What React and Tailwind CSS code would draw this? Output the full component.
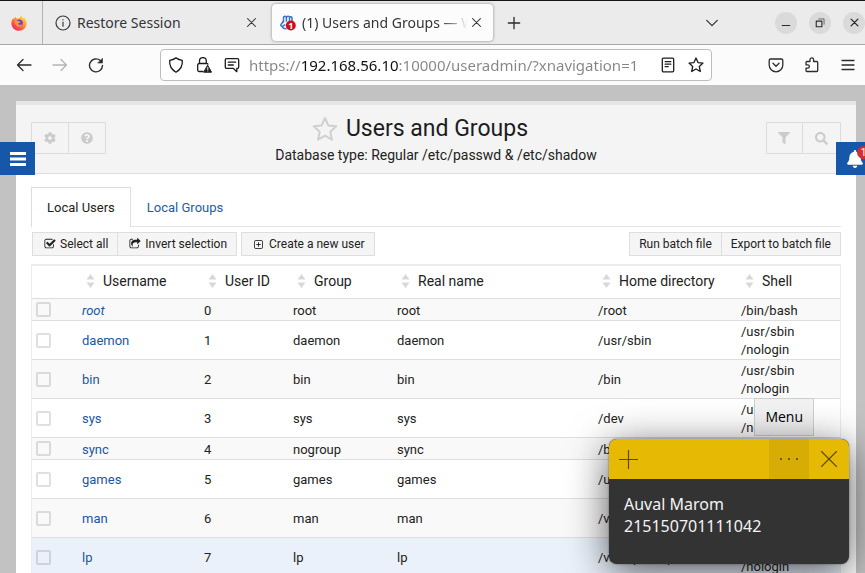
import React from "react";
import { FaBell, FaCog, FaFilter, FaQuestionCircle, FaSearch } from "react-icons/fa";

const users = [
  { name: "root", id: 0, group: "root", real: "root", home: "/root", shell: ["/bin/bash"], system: true },
  { name: "daemon", id: 1, group: "daemon", real: "daemon", home: "/usr/sbin", shell: ["/usr/sbin", "/nologin"] },
  { name: "bin", id: 2, group: "bin", real: "bin", home: "/bin", shell: ["/usr/sbin", "/nologin"] },
  { name: "sys", id: 3, group: "sys", real: "sys", home: "/dev", shell: ["/usr/sbin", "/nologin"] },
  { name: "sync", id: 4, group: "nogroup", real: "sync", home: "/bin", shell: ["/bin/sync"] },
  { name: "games", id: 5, group: "games", real: "games", home: "/usr/games", shell: ["/usr/sbin", "/nologin"] },
  { name: "man", id: 6, group: "man", real: "man", home: "/var/cache/man", shell: ["/usr/sbin", "/nologin"] },
  { name: "lp", id: 7, group: "lp", real: "lp", home: "/var/spool/lpd", shell: ["/usr/sbin", "/nologin"], active: true },
];

const headings = ["Username", "User ID", "Group", "Real name", "Home directory", "Shell"];

function Line({ size = 16, width = 1.3, className = "", children }) {
  return (
    <svg
      width={size}
      height={size}
      viewBox="0 0 16 16"
      fill="none"
      stroke="currentColor"
      strokeWidth={width}
      strokeLinecap="round"
      strokeLinejoin="round"
      className={"shrink-0 " + className}
      aria-hidden="true"
    >
      {children}
    </svg>
  );
}

function FirefoxLogo() {
  return (
    <svg width="16" height="16" viewBox="0 0 16 16" aria-hidden="true">
      <defs>
        <linearGradient id="flame" x1="0.85" y1="0.1" x2="0.2" y2="0.95">
          <stop offset="0" stopColor="#ffe14a" />
          <stop offset="0.4" stopColor="#ff9a2a" />
          <stop offset="0.75" stopColor="#ff4a45" />
          <stop offset="1" stopColor="#f02a6a" />
        </linearGradient>
      </defs>
      <path
        d="M9.6.3c1.4.8 2 1.900 2.300 2.900.6.2 1 .1 1.300-.6 1.500 1.500 2.600 3.500 2.500 6C15.500 12.800 12.200 15.800 8 15.800S.4 12.600.4 8.500c0-2 .6-3.900 1.900-5.500.1.700.3 1.100.6 1.300.4-1.200 1-2 1.900-2.600 0 .8.3 1.400.9 1.900 1 .1 1.900-.1 2.600-.7.8-.7 1.200-1.600 1.300-2.600z"
        fill="url(#flame)"
      />
      <circle cx="8.300" cy="8" r="3.600" fill="#7a3fd0" />
      <path d="M3.500 6.200c1.300-.8 2.900-.8 4.300.1l1.700.4c-.2.900-1 1.300-2.100 1.400-.6.900.1 1.900 1.400 1.900 1 0 1.800-.4 2.400-1-.3 2-1.700 2.900-3.300 2.700-2.500-.2-4.300-2.600-4.400-5.500z" fill="#ff9a35" />
    </svg>
  );
}

function WebminLogo() {
  return (
    <svg width="16" height="16" viewBox="0 0 16 16" aria-hidden="true">
      <g fill="none" stroke="#3d72c4" strokeWidth="1.500" strokeLinejoin="round">
        <path d="M3.500 7.500V2.700C3.500.8 6.400.8 6.400 2.700 6.400.6 9.700.6 9.700 2.700c.2-1.500 2.300-1.200 2.300.3v3" />
        <path d="M6.400 2.700v4M9.500 2.700v3" />
        <path d="M3.500 6 1.200 9.200c-.9 1.500.5 2.800 1.700 1.900l2.300-1.600M2.500 11.200c0 1.600 1.500 2.500 4 2.500" />
      </g>
      <circle cx="10.800" cy="10.500" r="5" fill="#cf1010" />
      <text x="10.800" y="14" textAnchor="middle" fontSize="9" fontWeight="700" fontFamily="Open Sans, sans-serif" fill="#fff">1</text>
    </svg>
  );
}

function StarOutline() {
  return (
    <svg width="26" height="26" viewBox="0 0 26 26" fill="none" stroke="#d0d0d0" strokeWidth="2" strokeLinejoin="round" aria-hidden="true">
      <path d="m13 2 3.300 7.400 8 .9-6 5.400 1.700 8L13 19.700l-7 4 1.700-8-6-5.400 8-.9z" />
    </svg>
  );
}

function CheckSquare() {
  return (
    <svg width="12" height="12" viewBox="0 0 1792 1792" fill="currentColor" aria-hidden="true">
      <path d="M1472 930v318q0 119-84.500 203.500t-203.500 84.500h-832q-119 0-203.500-84.500t-84.500-203.500v-832q0-119 84.500-203.500t203.500-84.500h832q63 0 117 25 15 7 18 23 3 17-9 29l-49 49q-10 10-23 10-3 0-9-2-23-6-45-6h-832q-66 0-113 47t-47 113v832q0 66 47 113t113 47h832q66 0 113-47t47-113v-254q0-13 9-22l64-64q10-10 23-10 6 0 12 3 20 8 20 29zm231-489l-814 814q-24 24-57 24t-57-24l-430-430q-24-24-24-57t24-57l110-110q24-24 57-24t57 24l263 263 647-647q24-24 57-24t57 24l110 110q24 24 24 57t-24 57z" />
    </svg>
  );
}

function ShareSquare() {
  return (
    <svg width="12" height="12" viewBox="0 0 1792 1792" fill="currentColor" aria-hidden="true">
      <path d="M1472 989v259q0 119-84.500 203.500t-203.500 84.500h-832q-119 0-203.500-84.500t-84.500-203.500v-832q0-119 84.500-203.500t203.500-84.500h255q13 0 22.500 9.500t9.500 22.500q0 27-26 32-77 26-133 60-10 4-16 4h-112q-66 0-113 47t-47 113v832q0 66 47 113t113 47h832q66 0 113-47t47-113v-214q0-19 18-29 28-13 54-37 16-16 35-8 21 9 21 29zm237-496l-384 384q-18 19-45 19-12 0-25-5-39-17-39-59v-192h-160q-323 0-438 131-119 137-74 473 3 23-20 34-8 2-12 2-16 0-26-13-10-14-21-31t-39.500-68.500-49.500-99.500-38.500-114-17.500-122q0-49 3.500-91t14-90 28-88 47-81.500 68.500-74 94.500-61.500 124.500-48.500 159.500-30.500 196.500-11h160v-192q0-42 39-59 13-5 25-5 26 0 45 19l384 384q19 19 19 45t-19 45z" />
    </svg>
  );
}

function PlusSquare() {
  return (
    <svg width="9" height="9" viewBox="0 0 10 10" fill="none" stroke="currentColor" aria-hidden="true">
      <rect x=".5" y=".5" width="9" height="9" rx="1.500" />
      <path d="M2.500 5h5M5 2.500v5" />
    </svg>
  );
}

function SortArrows() {
  return (
    <svg width="9" height="14" viewBox="0 0 9 14" fill="#d8d8d8" aria-hidden="true">
      <path d="M4.500 0 8.500 5.500h-8zM4.500 14 .5 8.500h8z" />
    </svg>
  );
}

function TabStrip() {
  return (
    <div className="flex h-[45px] shrink-0 items-stretch border-t border-b border-t-[#17131a] border-b-[#a8a8a8] bg-[#ebebeb]">
      <button aria-label="Firefox View" className="flex w-[43px] items-center justify-center border-r border-[#b4b4b4] pr-1">
        <FirefoxLogo />
      </button>
      <div className="flex w-[225px] items-center pr-2 pl-3">
        <Line width={1.2} className="text-[#3a3a3f]">
          <circle cx="8" cy="8" r="7" />
          <path d="M8 7.200v4M8 4.700v.1" />
        </Line>
        <span className="ml-1.5 flex-1 text-sm text-[#35353b]">Restore Session</span>
        <button aria-label="Close tab" className="p-1 text-[#3a3a3f]">
          <Line size={9} width={1.8}><path d="m1 1 14 14M15 1 1 15" /></Line>
        </button>
      </div>
      <div className="my-[3px] ml-1 flex w-[221px] items-center rounded bg-[#fcfcfc] pr-2 pl-2 shadow-[0_0_3px_rgba(0,0,0,0.45)]">
        <WebminLogo />
        <span className="ml-1.5 w-0 flex-1 overflow-hidden text-sm whitespace-nowrap text-[#35353b] [mask-image:linear-gradient(to_right,black_84%,transparent)]">
          (1) Users and Groups — Webmin
        </span>
        <button aria-label="Close tab" className="p-1 text-[#3a3a3f]">
          <Line size={9} width={1.8}><path d="m1 1 14 14M15 1 1 15" /></Line>
        </button>
      </div>
      <button aria-label="New tab" className="ml-[14px] text-[#2b2b30]">
        <Line size={14} width={1.5}><path d="M8 1.500v13M1.500 8h13" /></Line>
      </button>
      <button aria-label="List all tabs" className="mr-[56px] ml-auto text-[#3a3a3f]">
        <Line size={14} width={1.6}><path d="m2 5 6 6 6-6" /></Line>
      </button>
      <div className="flex items-center gap-3 text-[#2b2b2b]">
        <button aria-label="Minimize" className="flex size-[22px] items-center justify-center rounded-full bg-[#dadada]">
          <Line size={10} width={1.8}><path d="M2 12h12" /></Line>
        </button>
        <button aria-label="Restore" className="flex size-[22px] items-center justify-center rounded-full bg-[#dadada]">
          <Line size={10} width={1.8}><path d="M2 5h9v9H2z" /><path d="M6 1.500h8.500V10" strokeWidth="1" /></Line>
        </button>
        <button aria-label="Close window" className="flex size-[22px] items-center justify-center rounded-full bg-[#dadada]">
          <Line size={9} width={2.4}><path d="m2 2 12 12M14 2 2 14" /></Line>
        </button>
      </div>
    </div>
  );
}

function NavBar() {
  return (
    <div className="flex h-10 shrink-0 items-center bg-[#fbfbfb] pr-[9px] pl-4 text-[#2b2b30]">
      <div className="flex w-36 gap-5">
        <button aria-label="Back"><Line><path d="M15 8H1.500M7 2.500 1.500 8 7 13.500" /></Line></button>
        <button aria-label="Forward" className="text-[#b5b5b8]"><Line><path d="M1 8h13.500M9 2.500 14.500 8 9 13.500" /></Line></button>
        <button aria-label="Reload">
          <Line width={1.4}>
            <path d="M14.500 8.500A6.500 6.500 0 1 1 12.300 3.500" />
            <path d="M14.500 1.500v4.500H10z" fill="currentColor" strokeWidth=".6" />
          </Line>
        </button>
      </div>
      <div className="flex h-8 flex-1 items-center rounded border border-[#bdbdbf] bg-white px-[7px] text-[#1c1c20]">
        <Line className="mr-3"><path d="M8 .9c2 1.400 4 2.100 6.300 2.400.4 5-1.500 9.300-6.300 11.900C3.200 12.600 1.300 8.300 1.700 3.300 4 3 6 2.300 8 .9z" /></Line>
        <Line className="mr-3">
          <path d="M7 14.500H3.200c-.9 0-1.500-.6-1.500-1.500V8c0-.8.6-1.500 1.500-1.500h7.500c.6 0 1 .2 1.200.6M3.500 6.500V4a3.200 3.200 0 0 1 6.800 0v2.500" />
          <path d="m11.800 8.500 3.700 6.700H8z" fill="currentColor" strokeWidth="1" />
          <path d="M11.800 10.500v2M11.800 13.900v.1" stroke="#fff" strokeWidth="1" />
        </Line>
        <Line className="mr-[9px]">
          <path d="M2.500 1.700h11c.7 0 1.200.5 1.200 1.200v7.200c0 .7-.5 1.200-1.200 1.200h-.7v3.400l-3.600-3.400H2.500c-.7 0-1.200-.5-1.200-1.200V2.900c0-.7.5-1.200 1.200-1.200zM4.300 5.200h7.400M4.300 8h5" />
        </Line>
        <input
          aria-label="Address"
          defaultValue="https://192.168.56.10:10000/useradmin/?xnavigation=1"
          className="w-0 flex-1 bg-[linear-gradient(to_right,#858589_52px,#0f0f12_52px,#0f0f12_149px,#858589_149px)] bg-clip-text text-[15px] text-transparent outline-none"
        />
        <button aria-label="Reader view" className="mr-3">
          <Line><path d="M3.500 1.200h9c.7 0 1.200.5 1.200 1.200v11.200c0 .7-.5 1.200-1.200 1.200h-9c-.7 0-1.200-.5-1.200-1.200V2.400c0-.7.5-1.200 1.200-1.200zM5.200 4.700h5.600M5.200 7.200h5.600M5.200 9.700h3" /></Line>
        </button>
        <button aria-label="Bookmark this page">
          <Line><path d="m8 1 2 4.600 5 .5-3.700 3.400 1 5L8 12l-4.300 2.500 1-5L1 6.100l5-.5z" /></Line>
        </button>
      </div>
      <div className="ml-14 flex gap-5">
        <button aria-label="Pocket">
          <Line><path d="M2.500 2h11c.8 0 1.300.5 1.300 1.300V8a6.800 6.800 0 0 1-13.600 0V3.300C1.200 2.500 1.700 2 2.500 2zM5 6.300l3 3 3-3" /></Line>
        </button>
        <button aria-label="Extensions">
          <Line><path d="M2 5.500c0-.6.400-1 1-1h3V2.700a1.800 1.800 0 0 1 3.600 0v1.800h3.100c.6 0 1 .4 1 1v8c0 .6-.4 1-1 1H3c-.6 0-1-.4-1-1v-2.300h1.700a1.700 1.700 0 0 0 0-3.400H2z" /></Line>
        </button>
        <button aria-label="Open application menu">
          <Line><path d="M2 3.500h12M2 8h12M2 12.500h12" /></Line>
        </button>
      </div>
    </div>
  );
}

function PageHeader() {
  return (
    <header className="flex h-[73px] items-start justify-between border-t-4 border-b border-t-[#e6e6e6] border-b-[#dedede] bg-[#f4f4f4] px-[15px]">
      <div className="mt-[17px] flex h-8 border border-[#dcdcdc] text-[#cbcbcb]">
        <button aria-label="Module configuration" className="flex w-[37px] items-center justify-center border-r border-[#dcdcdc]"><FaCog size={12} /></button>
        <button aria-label="Help" className="flex w-9 items-center justify-center"><FaQuestionCircle size={12} /></button>
      </div>
      <div className="pt-[9px] text-center">
        <h1 className="flex items-center justify-center gap-2 pr-8 text-[23px] leading-[30px] text-[#1c1c1c]">
          <StarOutline />
          Users and Groups
        </h1>
        <p className="text-sm leading-[22px] text-[#222]">Database type: Regular /etc/passwd &amp; /etc/shadow</p>
      </div>
      <div className="mt-[17px] flex h-8 border border-[#dcdcdc] text-[#cbcbcb]">
        <button aria-label="Filter" className="flex w-9 items-center justify-center border-r border-[#dcdcdc]"><FaFilter size={12} /></button>
        <button aria-label="Search" className="flex w-[37px] items-center justify-center"><FaSearch size={13} /></button>
      </div>
    </header>
  );
}

function Toolbar() {
  return (
    <div className="mt-[5px] flex h-6 items-stretch gap-1 pl-px text-xs text-[#222]">
      <div className="flex border border-[#dedede] bg-[#f5f5f5]">
        <button className="flex items-center gap-1 border-r border-[#dedede] pr-[9px] pl-[11px]"><CheckSquare />Select all</button>
        <button className="flex items-center gap-1 pr-[9px] pl-[11px]"><ShareSquare />Invert selection</button>
      </div>
      <button className="flex items-center gap-1.5 border border-[#dedede] bg-[#f5f5f5] pr-[9px] pl-3"><PlusSquare />Create a new user</button>
      <div className="ml-auto flex border border-[#dedede] bg-[#f5f5f5]">
        <button className="border-r border-[#dedede] px-[9px]">Run batch file</button>
        <button className="px-[9px]">Export to batch file</button>
      </div>
    </div>
  );
}

function UsersTable() {
  return (
    <table className="mt-2 w-full table-fixed border-separate border-spacing-0 border-x border-t-2 border-[#ececec] text-[13px] leading-[18px] text-[#222]">
      <colgroup>
        <col className="w-[46px]" />
        <col className="w-[122px]" />
        <col className="w-[89px]" />
        <col className="w-[104px]" />
        <col />
        <col className="w-[143px]" />
        <col className="w-[103px]" />
      </colgroup>
      <thead>
        <tr className="h-[33px] text-sm">
          <th aria-label="Selected" className="border-b border-[#dedede]" />
          {headings.map((label) => (
            <th key={label} scope="col" className="border-b border-[#dedede] pb-0.5 pl-2 text-left font-normal">
              <button className="flex items-center gap-2"><SortArrows />{label}</button>
            </th>
          ))}
        </tr>
      </thead>
      <tbody className="[&_td]:border-b [&_td]:border-[#dedede] [&_td]:px-1">
        {users.map((user) => (
          <tr key={user.name} className={user.active ? "h-[22px] bg-[#eaf1fb]" : "h-[22px] odd:bg-[#f9f9f9]"}>
            <td>
              <input type="checkbox" aria-label={"Select " + user.name} className="block size-[15px] appearance-none rounded-xs border-2 border-black/12" />
            </td>
            <td className="pt-0.5">
              <a href="#user" className={user.system ? "text-[#1a56a5] italic" : "text-[#1a56a5]"}>{user.name}</a>
            </td>
            <td className="pt-0.5">{user.id}</td>
            <td className="pt-0.5">{user.group}</td>
            <td className="pt-0.5">{user.real}</td>
            <td className="pt-0.5">{user.home}</td>
            <td className="pt-0.5">{user.shell.map((part) => <div key={part}>{part}</div>)}</td>
          </tr>
        ))}
      </tbody>
    </table>
  );
}

function StickyNote() {
  return (
    <section className="absolute right-4 bottom-[9px] w-60 overflow-hidden rounded-lg bg-[#333] shadow-[0_8px_40px_rgba(0,0,0,0.65),0_0_2px_rgba(0,0,0,0.5)]">
      <div className="flex h-10 items-stretch bg-[#e6b905] text-[#5c4a05]">
        <button aria-label="New note" className="mr-auto px-[10px]">
          <Line size={19} width={1}><path d="M8 0v16M0 8h16" /></Line>
        </button>
        <button aria-label="Note menu" className="flex w-10 items-center justify-center gap-[6px] bg-[#d6ac05]">
          <span className="size-[2px] rounded-full bg-[#4a3c05]" />
          <span className="size-[2px] rounded-full bg-[#4a3c05]" />
          <span className="size-[2px] rounded-full bg-[#4a3c05]" />
        </button>
        <button aria-label="Close note" className="flex w-10 items-center justify-center">
          <Line size={16} width={1.1}><path d="m.5.5 15 15M15.500.5l-15 15" /></Line>
        </button>
      </div>
      <p className="h-[85px] px-[15px] pt-[14px] text-base leading-[22px] text-[#f3f3f3]">
        Auval Marom
        <br />
        215150701111042
      </p>
    </section>
  );
}

export default function App() {
  return (
    <div className="relative flex h-screen flex-col overflow-hidden bg-[#c2c2c2] font-['Noto_Sans','Open_Sans',sans-serif]">
      <TabStrip />
      <NavBar />
      <div className="relative min-h-0 flex-1 overflow-hidden pt-4 pr-[9px] pl-4 font-['Roboto',sans-serif]">
        <main className="bg-white">
          <PageHeader />
          <div className="px-[15px] pt-[13px]">
            <nav className="flex h-10 border-b border-[#e4e4e4] text-[13px] text-[#222]">
              <a href="#users" className="-mb-px flex items-center border border-b-0 border-[#dedede] bg-white px-[15px]">Local Users</a>
              <a href="#groups" className="flex items-center px-4 pt-0.5 text-[#1a5cb0]">Local Groups</a>
            </nav>
            <Toolbar />
            <UsersTable />
          </div>
        </main>
        <button aria-label="Toggle navigation" className="absolute top-[57px] left-0 flex h-[33px] w-[35px] items-center justify-center bg-[#1757a9] text-white">
          <svg width="16" height="14" viewBox="0 0 16 14" fill="currentColor" aria-hidden="true"><path d="M0 0h16v3H0zM0 5.500h16v3H0zM0 11h16v3H0z" /></svg>
        </button>
        <button aria-label="Notifications" className="absolute top-[57px] right-0 flex h-[33px] w-[29px] items-center overflow-hidden bg-[#1757a9] pl-[10px] text-white">
          <FaBell size={18} className="shrink-0" />
          <span className="absolute top-1 left-[21px] flex size-[13px] items-center justify-center rounded-full bg-[#d32f2f] text-[10px]">1</span>
        </button>
      </div>
      <div role="tooltip" className="absolute right-[51px] bottom-[137px] border border-[#cfcfcf] bg-[#f2f2f2] px-[10px] py-[6px] font-['Open_Sans',sans-serif] text-sm leading-[24px] text-black">
        Menu
      </div>
      <StickyNote />
    </div>
  );
}
